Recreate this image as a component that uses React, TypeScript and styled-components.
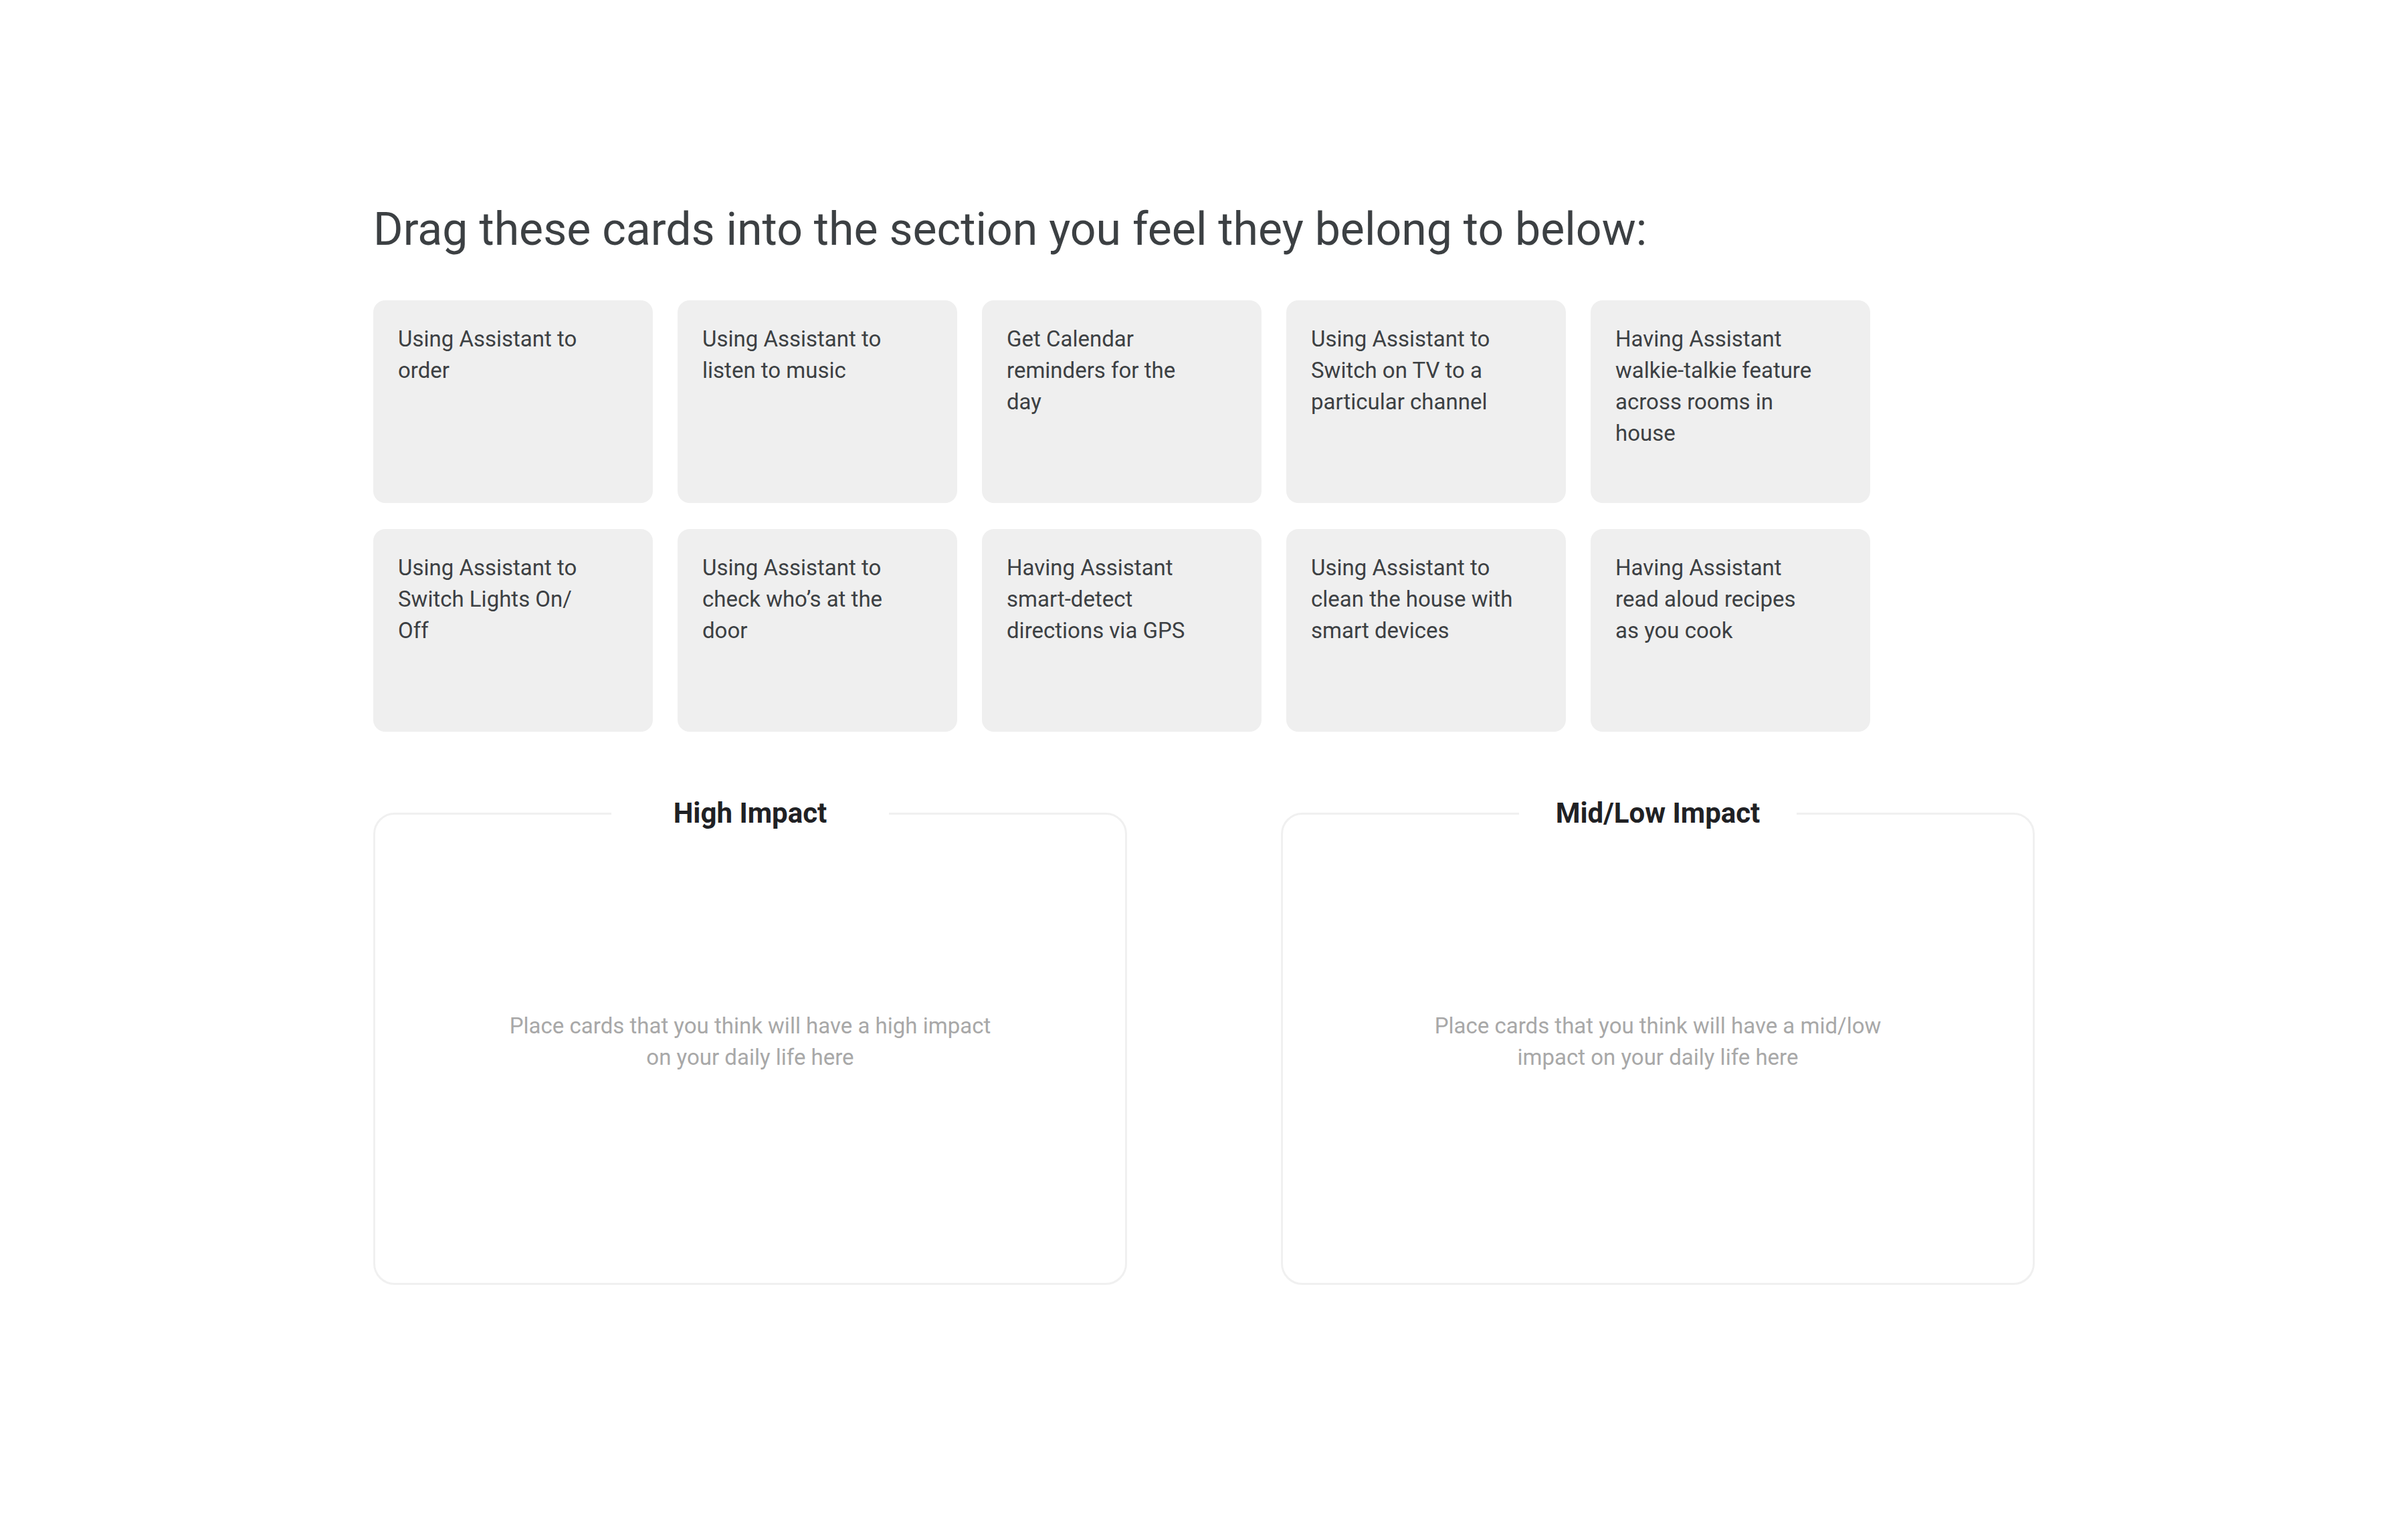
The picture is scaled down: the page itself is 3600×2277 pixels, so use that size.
import React, { FC } from 'react'
import styled, { createGlobalStyle } from 'styled-components'

const cards: string[] = [
	'Using Assistant to order',
	'Using Assistant to listen to music',
	'Get Calendar reminders for the day',
	'Using Assistant to Switch on TV to a particular channel',
	'Having Assistant walkie-talkie feature across rooms in house',
	'Using Assistant to Switch Lights On/ Off',
	'Using Assistant to check who’s at the door',
	'Having Assistant smart-detect directions via GPS',
	'Using Assistant to clean the house with smart devices',
	'Having Assistant read aloud recipes as you cook',
]

const zones = [
	{
		title: 'High Impact',
		hint: 'Place cards that you think will have a high impact on your daily life here',
	},
	{
		title: 'Mid/Low Impact',
		hint: 'Place cards that you think will have a mid/low impact on your daily life here',
	},
]

const App: FC = () => {
	return (
		<>
			<GlobalStyle />
			<StyledPage>
				<StyledHeading>Drag these cards into the section you feel they belong to below:</StyledHeading>
				<StyledCardGrid>
					{cards.map((text) => (
						<StyledCard key={text}>{text}</StyledCard>
					))}
				</StyledCardGrid>
				<StyledZones>
					{zones.map((zone) => (
						<StyledZone key={zone.title}>
							<StyledLegend>{zone.title}</StyledLegend>
							<StyledZoneBody>
								<StyledHint>{zone.hint}</StyledHint>
							</StyledZoneBody>
						</StyledZone>
					))}
				</StyledZones>
			</StyledPage>
		</>
	)
}

export default App

const GlobalStyle = createGlobalStyle`
	body {
		margin: 0;
		background: #ffffff;
		font-family: Roboto, "Open Sans", sans-serif;
	}
`

const StyledPage = styled.main`
	width: 2484px;
	margin: 0 auto;
	padding-top: 303px;
`

const StyledHeading = styled.h1`
	margin: 0 0 66px;
	font-size: 68px;
	line-height: 80px;
	font-weight: 400;
	color: #3c4043;
`

const StyledCardGrid = styled.div`
	display: grid;
	grid-template-columns: repeat(5, 418px);
	gap: 39px 37px;
`

const StyledCard = styled.div`
	box-sizing: border-box;
	height: 303px;
	padding: 34px 69px 0 37px;
	background: #efefef;
	border-radius: 18px;
	font-size: 33px;
	line-height: 47px;
	color: #3c4043;
`

const StyledZones = styled.div`
	display: grid;
	grid-template-columns: repeat(2, 1127px);
	gap: 230px;
	margin-top: 97px;
`

const StyledZone = styled.fieldset`
	box-sizing: border-box;
	height: 730px;
	margin: 0;
	padding: 0;
	border: 3px solid #f0f0f0;
	border-radius: 32px;
	display: flex;
	flex-direction: column;
`

const StyledLegend = styled.legend`
	box-sizing: border-box;
	width: 415px;
	margin: 0 auto;
	padding: 0;
	text-align: center;
	font-size: 42px;
	line-height: 50px;
	font-weight: 700;
	color: #202124;
`

const StyledZoneBody = styled.div`
	flex: 1;
	display: flex;
	align-items: center;
	justify-content: center;
	padding-bottom: 46px;
`

const StyledHint = styled.p`
	margin: 0;
	max-width: 760px;
	text-align: center;
	font-size: 33px;
	line-height: 47px;
	color: #a8a8a8;
`
